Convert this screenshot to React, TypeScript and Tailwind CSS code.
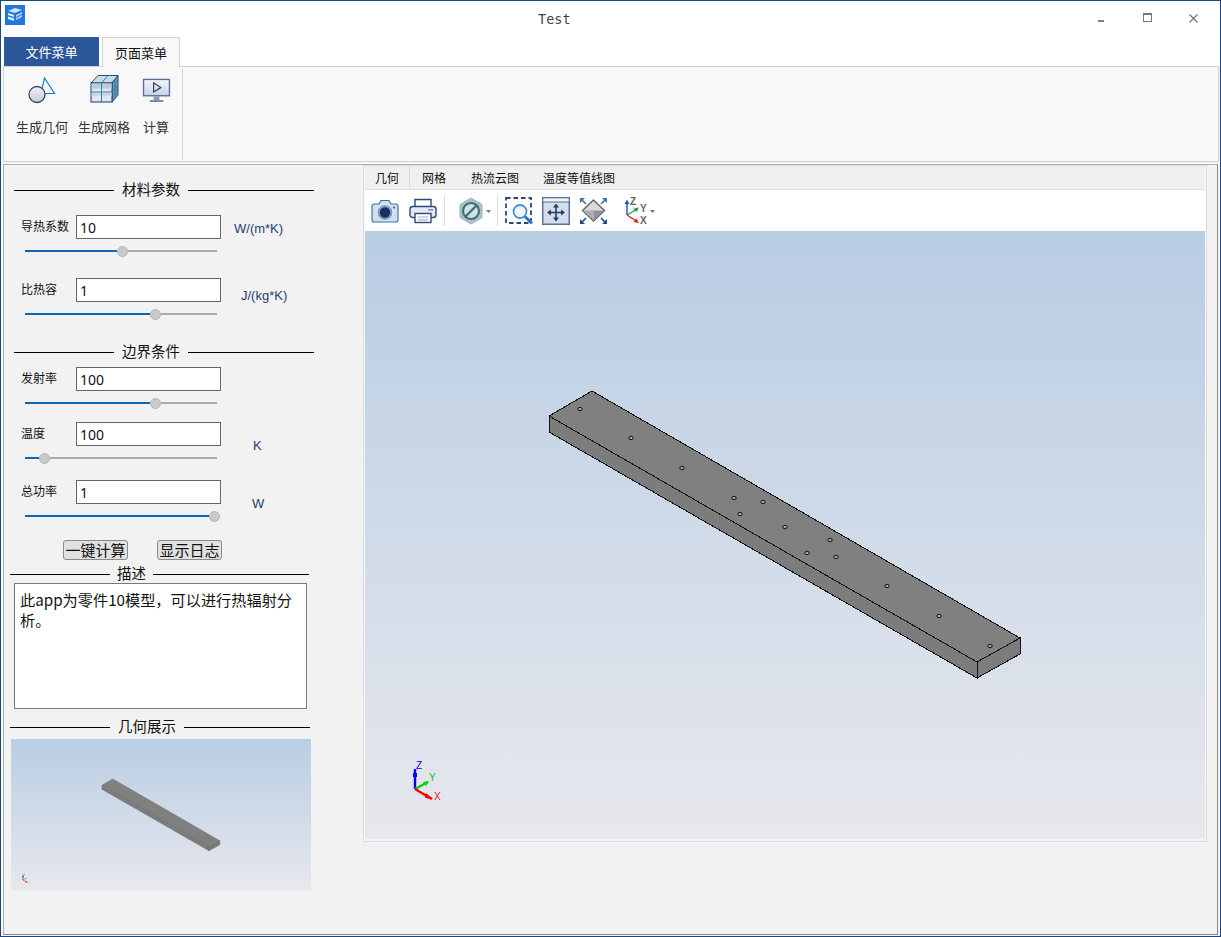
import React from "react";

const cjk = "font-['Noto_Sans_CJK_SC','Noto_Sans',sans-serif]";

function Header({ text, className, left, right, textClass }: { text: string; className: string; left: string; right: string; textClass: string }) {
  return (
    <div className={`flex items-center ${className}`}>
      <div className={`h-px bg-black ${left}`} />
      <span className={`mb-[2px] text-[14.5px] leading-5 text-[#111] whitespace-nowrap ${textClass}`}>{text}</span>
      <div className={`h-px bg-black ${right}`} />
    </div>
  );
}

function Slider({ value, className }: { value: number; className: string }) {
  return (
    <div className={`ml-[21px] flex h-4 w-[192px] items-center ${className}`}>
      <div className="h-[2px] shrink-0 bg-[#0f64b4]" style={{ width: value }} />
      <div className="h-[11px] w-[11px] shrink-0 rounded-full border border-[#b5b5b5] bg-[#cacaca]" />
      <div className="h-[2px] flex-1 bg-[#ababab]" />
    </div>
  );
}

function Field({ label, value, unit, className, labelClass, unitClass }: { label: string; value: string; unit?: string; className: string; labelClass: string; unitClass?: string }) {
  return (
    <div className={`flex h-6 items-start ${className}`}>
      <span className={`ml-[17px] w-[55px] text-[12px] leading-4 text-[#111] whitespace-nowrap ${labelClass}`}>{label}</span>
      <div className="flex h-6 w-[145px] items-center border border-[#666] bg-white pl-[3px] text-[14px] text-[#111] font-['Noto_Sans',sans-serif]">{value}</div>
      {unit && <span className={`text-[13px] leading-4 text-[#1c3f70] font-['Liberation_Sans',sans-serif] ${unitClass ?? ""}`}>{unit}</span>}
    </div>
  );
}

const holes: [number, number][] = [
  [580, 409], [631, 438], [682, 468], [734, 498], [763, 502], [740, 514], [785, 527],
  [830, 540], [807, 553], [836, 557], [887, 586], [939, 616], [990, 646],
];

function Beam({ sw, stroke, crisp, holeStroke }: { sw: number; stroke: string; crisp: boolean; holeStroke: string }) {
  return (
    <g stroke={stroke} strokeWidth={sw} strokeLinejoin="miter">
      <g shapeRendering={crisp ? "crispEdges" : "auto"}>
        <polygon points="549,416 592,391 1020,638 977,662" fill="#808080" />
        <polygon points="549,416 977,662 977,678 549,432" fill="#7c7c7c" />
        <polygon points="977,662 1020,638 1020,654 977,678" fill="#7c7c7c" />
      </g>
      {holes.map(([x, y]) => (
        <ellipse key={`${x}-${y}`} cx={x} cy={y} rx={2.2} ry={1.7} fill="#a8a8a8" stroke={holeStroke} strokeWidth={sw} />
      ))}
    </g>
  );
}

function Axes() {
  return (
    <g fontFamily="'Liberation Sans',sans-serif" fontSize="10">
      <line x1="415" y1="789" x2="415" y2="769" stroke="#0000ff" strokeWidth="2.4" />
      <rect x="413" y="773" width="4" height="4" fill="#0000ff" />
      <line x1="415" y1="789" x2="428" y2="782" stroke="#11cc11" strokeWidth="2.4" />
      <polygon points="423,782 429,781 426,786" fill="#11cc11" />
      <line x1="415" y1="789" x2="432" y2="799" stroke="#ff0000" strokeWidth="2.4" />
      <polygon points="426,793 433,799 425,798" fill="#ff0000" />
      <text x="416" y="769" fill="#0000ee">Z</text>
      <text x="429" y="781" fill="#22bb22">Y</text>
      <text x="434" y="800" fill="#dd2222">X</text>
    </g>
  );
}

function AppIcon() {
  return (
    <svg width="20" height="20" viewBox="0 0 20 20" className="shrink-0">
      <rect width="20" height="20" fill="#1f78e0" />
      <path d="M3 6 L10 3 L17 5 L10 8 Z" fill="#cfe4fb" />
      <path d="M3 8 L9 10 V12 L3 10 Z M3 11.5 L9 13.5 V16 L3 14 Z" fill="#e6f1fd" />
      <path d="M11 10 L17 7 V9 L11 12 Z M11 13 L17 10 V12 L11 15 Z" fill="#a9cdf6" />
    </svg>
  );
}

function RibbonGeometry() {
  return (
    <svg width="28" height="28" viewBox="0 0 28 28">
      <path d="M16.5 2 L26.5 17.5 H13 Z" fill="#f4f8fc" stroke="#1a7fc4" strokeWidth="1.2" />
      <defs>
        <linearGradient id="cg" x1="0" y1="0" x2="0" y2="1">
          <stop offset="0" stopColor="#f0f2f7" />
          <stop offset="1" stopColor="#c3cadb" />
        </linearGradient>
      </defs>
      <circle cx="9" cy="18.5" r="8" fill="url(#cg)" stroke="#33456e" strokeWidth="1.3" />
    </svg>
  );
}

function RibbonMesh() {
  return (
    <svg width="30" height="30" viewBox="0 0 30 30">
      <polygon points="2,9 9,1.5 29,1.5 23,9" fill="#c7dbe9" stroke="#2a4a78" strokeWidth="1" />
      <polygon points="23,9 29,1.5 29,21 23,28" fill="#6d92ae" stroke="#2a4a78" strokeWidth="1" />
      <rect x="2" y="9" width="21" height="19" fill="#e2e7ee" stroke="#2a4a78" strokeWidth="1.1" />
      <rect x="2.6" y="9.6" width="20" height="5" fill="#bdc9d6" />
      <rect x="2.6" y="19" width="20" height="3" fill="#cdd6e0" />
      <path d="M12.5 9 V28 M2 18 H23 M12.5 9 L19 1.5 M26 5 V24.5 M23 18 L29 11" stroke="#2584b8" strokeWidth="1" fill="none" />
    </svg>
  );
}

function RibbonMonitor() {
  return (
    <svg width="29" height="24" viewBox="0 0 30 25" className="mb-[2px]">
      <defs>
        <linearGradient id="mg" x1="0" y1="0" x2="0" y2="1">
          <stop offset="0" stopColor="#f4f6fa" />
          <stop offset="1" stopColor="#c5d3e6" />
        </linearGradient>
      </defs>
      <rect x="1.5" y="1.5" width="27" height="17" fill="url(#mg)" stroke="#5a6e93" strokeWidth="1.4" />
      <path d="M12 5 L19.5 10 L12 14.5 Z" fill="none" stroke="#2b3a64" strokeWidth="1.2" />
      <rect x="12" y="19" width="6" height="4" fill="#8b9bb5" />
      <path d="M8 24 H22" stroke="#2b3a64" strokeWidth="1.2" />
    </svg>
  );
}

function Camera() {
  return (
    <svg width="28" height="24" viewBox="0 0 28 24">
      <path d="M1 6.5 Q1 5 3 5 H8 L10 1.5 H18 L20 5 H25 Q27 5 27 6.5 V21 Q27 23 25 23 H3 Q1 23 1 21 Z" fill="#cfe0f0" stroke="#3f6aa3" strokeWidth="1.1" />
      <circle cx="14" cy="13.5" r="8" fill="#7f9cc4" stroke="#f1f5fa" strokeWidth="1" />
      <circle cx="14" cy="13.5" r="5.2" fill="#1c2f5e" />
      <circle cx="23" cy="8.5" r="1" fill="#2b4a85" />
    </svg>
  );
}

function Printer() {
  return (
    <svg width="28" height="26" viewBox="0 0 28 26">
      <path d="M6 9 V1.5 H22 V9" fill="#fff" stroke="#2f4a78" strokeWidth="1.4" />
      <rect x="1" y="8.5" width="26" height="11" rx="2.5" fill="#e4e8ef" stroke="#2f4a78" strokeWidth="1.4" />
      <rect x="19" y="11" width="5" height="1.6" fill="#7f93b2" />
      <rect x="6" y="15.5" width="16" height="9" fill="#fff" stroke="#2f4a78" strokeWidth="1.4" />
      <path d="M9 19 H19 M9 21.8 H19" stroke="#9fb0c8" strokeWidth="1.2" />
    </svg>
  );
}

function Hex() {
  return (
    <svg width="24" height="28" viewBox="0 0 24 28">
      <polygon points="12,1 23,7.5 23,20.5 12,27 1,20.5 1,7.5" fill="#a9c3c8" stroke="#9ab4b9" strokeWidth="1" />
      <circle cx="12" cy="14" r="8" fill="#d4e0e2" stroke="#3f6f7c" strokeWidth="2.2" />
      <path d="M6.5 19.5 L17.5 8.5" stroke="#3f6f7c" strokeWidth="2.4" />
    </svg>
  );
}

function Caret() {
  return (
    <svg width="5" height="3" viewBox="0 0 5 3">
      <path d="M0 0 H5 L2.5 3 Z" fill="#777" />
    </svg>
  );
}

function ZoomBox() {
  return (
    <svg width="28" height="28" viewBox="0 0 28 28">
      <rect x="1" y="1" width="25" height="25" fill="none" stroke="#2b4777" strokeWidth="1.8" strokeDasharray="4.5 3" />
      <circle cx="15" cy="14.5" r="6.5" fill="#f2f7fc" stroke="#4a90c8" strokeWidth="1.8" />
      <path d="M20 19.5 L27 26.5" stroke="#1f78c8" strokeWidth="3" />
    </svg>
  );
}

function Fit() {
  return (
    <svg width="28" height="28" viewBox="0 0 28 28">
      <rect x="0.75" y="0.75" width="26.5" height="26.5" fill="#d5dde8" stroke="#56749c" strokeWidth="1.5" />
      <rect x="1.5" y="1.5" width="25" height="3" fill="#eef2f7" />
      <path d="M1 5 H27" stroke="#56749c" strokeWidth="1" />
      <path d="M14 9 V22 M8 15.5 H20" stroke="#1f3d6b" strokeWidth="1.6" />
      <path d="M14 6.5 L11 10.5 H17 Z M14 24.5 L11 20.5 H17 Z M5 15.5 L9 12.5 V18.5 Z M23 15.5 L19 12.5 V18.5 Z" fill="#1f3d6b" />
    </svg>
  );
}

function Diamond() {
  return (
    <svg width="29" height="28" viewBox="0 0 29 28">
      <polygon points="14.5,3 25.5,13.5 14.5,24 3.5,13.5" fill="#d9dade" stroke="#5d6670" strokeWidth="1.4" />
      <polygon points="14.5,13.5 25,13.5 14.5,23.5" fill="#8f9298" />
      <polygon points="14.5,13.5 4,13.5 14.5,23.5" fill="#a9acb2" />
      <path d="M2 2 L7 7 M27 2 L22 7" stroke="#46709e" strokeWidth="1.6" />
      <path d="M2 26 L7 21 M27 26 L22 21" stroke="#1f4a80" strokeWidth="1.6" />
      <path d="M1 1 H6 L1 6 Z M28 1 H23 L28 6 Z" fill="#46709e" />
      <path d="M1 27 H6 L1 22 Z M28 27 H23 L28 22 Z" fill="#1f4a80" />
    </svg>
  );
}

function AxisIcon() {
  return (
    <svg width="26" height="28" viewBox="0 0 26 28" fontFamily="'Liberation Sans',sans-serif" fontSize="10" fontWeight="700">
      <path d="M3 18 V5" stroke="#1d4fb8" strokeWidth="1.4" />
      <path d="M3 2.5 L0.5 7 H5.5 Z" fill="#1d4fb8" />
      <path d="M3 18 L13 12" stroke="#1a9a4a" strokeWidth="1.4" />
      <path d="M15 10.5 L9.5 11.5 L12.5 15 Z" fill="#1a9a4a" />
      <path d="M3 18 L13 24.5" stroke="#e02020" strokeWidth="1.4" />
      <path d="M15 26 L9.5 25 L12.5 21.5 Z" fill="#e02020" />
      <text x="6" y="8" fill="#666">Z</text>
      <text x="16" y="15" fill="#666">Y</text>
      <text x="16" y="27" fill="#666">X</text>
    </svg>
  );
}

function RibbonItem({ icon, label, className }: { icon: React.ReactNode; label: string; className: string }) {
  return (
    <div className={`flex flex-col items-center ${className}`}>
      <div className="flex h-8 items-end justify-center">{icon}</div>
      <span className="mt-[13px] text-[13px] leading-5 text-[#333] whitespace-nowrap">{label}</span>
    </div>
  );
}

export default function App() {
  return (
    <div className={`flex h-[937px] w-[1221px] flex-col overflow-hidden border border-[#1c4580] bg-[#f6f6f6] ${cjk}`}>
      {/* title bar */}
      <div className="flex h-9 shrink-0 bg-white">
        <div className="ml-1 mt-1"><AppIcon /></div>
        <span className="ml-[513px] mt-[10px] text-[13.5px] leading-4 text-[#444] font-['DejaVu_Sans_Mono',monospace]">Test</span>
        <div className="ml-[527px] mt-[19px] h-[2px] w-[6px] bg-[#808080]" />
        <div className="ml-[39px] mt-[12px] h-[9px] w-[9px] border border-t-2 border-[#777]" />
        <svg width="9" height="9" viewBox="0 0 9 9" className="ml-[37px] mt-[13px]">
          <path d="M0.5 0.5 L8.5 8.5 M8.5 0.5 L0.5 8.5" stroke="#777" strokeWidth="1.2" />
        </svg>
      </div>
      {/* tabs */}
      <div className="flex h-[29px] shrink-0 items-end bg-white pl-[3px] text-[13px]">
        <div className="flex h-[29px] w-[95px] items-center justify-center bg-[#2b579a] text-white">文件菜单</div>
        <div className="relative z-10 -mb-px ml-[3px] flex h-[30px] w-[78px] items-center justify-center border border-b-0 border-[#d2d2d2] bg-[#f8f8f8] text-[#111]">页面菜单</div>
      </div>
      {/* ribbon */}
      <div className="ml-[2px] mr-[1px] flex h-[96px] shrink-0 border border-[#d2d2d2] bg-[#f8f8f8] pt-[2px]">
        <div className="flex h-[91px] w-[179px] border-r border-[#d2d2d2] pt-[3px]">
          <RibbonItem className="ml-[12px] w-[52px]" icon={<RibbonGeometry />} label="生成几何" />
          <RibbonItem className="ml-[10px] w-[52px]" icon={<RibbonMesh />} label="生成网格" />
          <RibbonItem className="ml-[13px] w-[26px]" icon={<RibbonMonitor />} label="计算" />
        </div>
      </div>
      {/* main */}
      <div className="mb-px ml-[2px] mr-[2px] mt-[2px] flex flex-1 border border-[#b0b0b0] border-b-[#888] border-r-[#888] bg-[#f2f2f2]">
        <div className="w-[359px] shrink-0">
          <Header text="材料参数" className="mt-[15px] h-5" left="ml-[10px] w-[100px]" right="w-[126px]" textClass="ml-2 mr-2" />
          <Field className="mt-[15px]" label="导热系数" value="10" unit="W/(m*K)" labelClass="mt-[3px]" unitClass="ml-[13px] mt-[6px]" />
          <Slider value={92} className="mt-1" />
          <Field className="mt-[19px]" label="比热容" value="1" unit="J/(kg*K)" labelClass="mt-[3px]" unitClass="ml-5 mt-[10px]" />
          <Slider value={125} className="mt-1" />
          <Header text="边界条件" className="mt-5 h-5" left="ml-[10px] w-[100px]" right="w-[126px]" textClass="ml-2 mr-2" />
          <Field className="mt-[5px]" label="发射率" value="100" labelClass="mt-[3px]" />
          <Slider value={125} className="mt-1" />
          <Field className="mt-[11px]" label="温度" value="100" unit="K" labelClass="mt-[3px]" unitClass="ml-8 mt-[16px]" />
          <Slider value={14} className="mt-1" />
          <Field className="mt-[14px]" label="总功率" value="1" unit="W" labelClass="mt-[3px]" unitClass="ml-[31px] mt-[16px]" />
          <Slider value={184} className="mt-1" />
          <div className="mt-4 flex h-5 pl-[59px] text-[15px] text-[#111]">
            <div className="flex h-5 w-[65px] items-center justify-center rounded-[3px] border border-[#8a8a8a] bg-[#e1e1e1] whitespace-nowrap">一键计算</div>
            <div className="ml-[29px] flex h-5 w-[65px] items-center justify-center rounded-[3px] border border-[#8a8a8a] bg-[#e1e1e1] whitespace-nowrap">显示日志</div>
          </div>
          <Header text="描述" className="mt-[6px] h-4" left="ml-[6px] w-[100px]" right="w-[156px]" textClass="ml-[7px] mr-[7px]" />
          <div className="ml-[10px] mt-px h-[126px] w-[293px] border border-[#7a7a7a] bg-white px-[5px] pt-[5px] text-[15.2px] leading-5 text-[#111]">
            此app为零件10模型，可以进行热辐射分析。
          </div>
          <Header text="几何展示" className="mt-2 h-5" left="ml-[6px] w-[100px]" right="w-[126px]" textClass="ml-2 mr-2" />
          <div className="ml-[7px] mt-[2px] h-[151px] w-[300px] bg-linear-to-b from-[#b9cde3] to-[#e7e8ed]">
            <svg width="300" height="151" viewBox="185 231 1200 604" className="block">
              <Beam sw={2} stroke="#6a6a6a" crisp={false} holeStroke="#707070" />
              <g transform="translate(-182 6)"><Axes /></g>
            </svg>
          </div>
        </div>
        {/* right */}
        <div className="flex h-[677px] w-[844px] flex-col border border-[#dcdcdc] bg-[#f5f5f5] px-px">
          <div className="flex h-6 shrink-0 border-b border-[#dcdcdc] bg-[#f0f0f0] text-[12px] leading-[23px] text-[#111]">
            <div className="w-[45px] border-r border-[#dcdcdc] pl-[10px]">几何</div>
            <div className="ml-3 w-[24px] whitespace-nowrap">网格</div>
            <div className="ml-[25px] w-[48px] whitespace-nowrap">热流云图</div>
            <div className="ml-6 whitespace-nowrap">温度等值线图</div>
          </div>
          <div className="flex h-[41px] shrink-0 items-center bg-white">
            <div className="ml-[6px]"><Camera /></div>
            <div className="ml-[10px]"><Printer /></div>
            <div className="ml-[7px] h-[30px] w-px bg-[#d8d8d8]" />
            <div className="ml-[14px]"><Hex /></div>
            <div className="ml-[3px] mt-px"><Caret /></div>
            <div className="ml-[6px] h-[30px] w-px bg-[#d8d8d8]" />
            <div className="ml-[7px]"><ZoomBox /></div>
            <div className="ml-[9px]"><Fit /></div>
            <div className="ml-[9px]"><Diamond /></div>
            <div className="ml-4"><AxisIcon /></div>
            <div className="mt-px"><Caret /></div>
          </div>
          <div className="h-[608px] bg-linear-to-b from-[#b9cde3] to-[#e7e8ed]">
            <svg width="840" height="608" viewBox="365 231 840 608" className="block">
              <Beam sw={1} stroke="#111" crisp={true} holeStroke="#111" />
              <Axes />
            </svg>
          </div>
        </div>
      </div>
    </div>
  );
}
